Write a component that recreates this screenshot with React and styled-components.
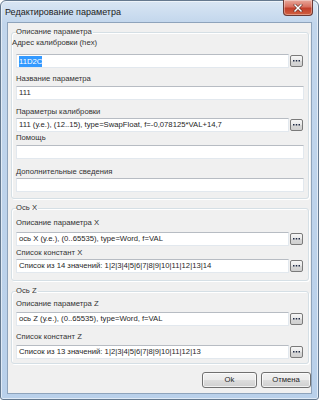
import React from "react";
import styled, { createGlobalStyle } from "styled-components";

const Global = createGlobalStyle`
  html, body { margin: 0; padding: 0; background: #fff; }
  body { font-family: "Liberation Sans", Arial, sans-serif; }
  * { box-sizing: border-box; }
`;

const Window = styled.div`
  width: 319px;
  height: 400px;
  border: 1px solid #65798f;
  border-radius: 6px 6px 3px 3px;
  background: linear-gradient(180deg, #d9e6f4 0px, #c2d6ec 22px, #b9d0ea 100%);
  display: flex;
  flex-direction: column;
  padding: 0 6px 5px 6px;
  box-shadow: inset 0 0 0 1px rgba(255,255,255,0.55);
`;

const TitleBar = styled.div`
  height: 21px;
  display: flex;
  align-items: flex-start;
  justify-content: space-between;
`;

const Title = styled.div`
  font-size: 9px;
  line-height: 11px;
  color: #222;
  padding-top: 6px;
  margin-left: -2px;
`;

const CloseButton = styled.div`
  width: 30px;
  height: 16px;
  margin-top: -1px;
  margin-right: -1px;
  border: 1px solid #6b3a35;
  border-top: none;
  border-radius: 0 0 4px 4px;
  background: linear-gradient(180deg, #e8a89b 0%, #d8705f 45%, #c23f2b 55%, #d0603f 100%);
  display: flex;
  align-items: center;
  justify-content: center;
  box-shadow: inset 0 0 0 1px rgba(255,255,255,0.35);
`;

const Client = styled.div`
  flex: 1;
  border: 1px solid #8ea3bb;
  background: #f0f0f0;
  padding: 4px 2px 0 3px;
  display: flex;
  flex-direction: column;
`;

const Group = styled.fieldset`
  margin: ${p => p.$top || 0}px 0 0 0;
  padding: 0 4px ${p => p.$bottom || 0}px 4px;
  border: 1px solid #d5dfe5;
  border-radius: 3px;
  box-shadow: 1px 1px 0 #ffffff inset, 1px 1px 0 #ffffff;
  min-width: 0;
`;

const Legend = styled.legend`
  padding: 0 1px 0 0;
  font-size: 7.7px;
  line-height: 10px;
  height: 10px;
  color: #333;
`;

const Label = styled.div`
  font-size: 7.7px;
  line-height: 10px;
  height: 10px;
  color: #333;
  white-space: nowrap;
  margin-top: ${p => p.$top || 0}px;
  margin-left: ${p => p.$shift || 0}px;
`;

const InputRow = styled.div`
  display: flex;
  align-items: center;
  gap: 1px;
  margin-top: ${p => p.$top || 0}px;
  height: 14px;
`;

const TextBox = styled.div`
  flex: 1;
  height: 14px;
  background: #ffffff;
  border: 1px solid #e2e8ee;
  border-top-color: #b7bcc3;
  font-size: 7.7px;
  line-height: 12px;
  color: #262626;
  padding-left: 2px;
  white-space: nowrap;
  overflow: hidden;
`;

const Selected = styled.span`
  background: #3399ff;
  color: #fff;
  display: inline-block;
  line-height: 11px;
  margin-top: 1px;
`;

const DotsButton = styled.div`
  width: 13px;
  height: 12px;
  margin-right: 1px;
  border: 1px solid #7a7a7a;
  border-radius: 2px;
  background: linear-gradient(180deg, #f6f6f6 0%, #e8e8e8 50%, #d8d8d8 51%, #d0d0d0 100%);
  display: flex;
  align-items: center;
  justify-content: center;
`;

const ButtonRow = styled.div`
  display: flex;
  justify-content: flex-end;
  gap: 4px;
  margin: 8px -2px 0 0;
`;

const PushButton = styled.div`
  width: ${p => p.$w}px;
  height: 16px;
  border: 1px solid #707070;
  border-radius: 3px;
  background: linear-gradient(180deg, #f2f2f2 0%, #ebebeb 50%, #dddddd 51%, #cfcfcf 100%);
  box-shadow: inset 0 0 0 1px rgba(255,255,255,0.7);
  font-size: 7.7px;
  line-height: 14px;
  text-align: center;
  color: #262626;
`;

function Dots() {
  return (
    <svg width="7" height="2" viewBox="0 0 7 2">
      <rect x="0" y="0" width="1.5" height="1.5" fill="#1f2a44" />
      <rect x="2.75" y="0" width="1.5" height="1.5" fill="#1f2a44" />
      <rect x="5.5" y="0" width="1.5" height="1.5" fill="#1f2a44" />
    </svg>
  );
}

function Field({ label, labelTop, inputTop, value, button, labelShift, children }) {
  return (
    <>
      <Label $top={labelTop} $shift={labelShift}>{label}</Label>
      <InputRow $top={inputTop}>
        <TextBox>{children || value}</TextBox>
        {button && (
          <DotsButton>
            <Dots />
          </DotsButton>
        )}
      </InputRow>
    </>
  );
}

export default function App() {
  return (
    <>
      <Global />
      <Window>
        <TitleBar>
          <Title>Редактирование параметра</Title>
          <CloseButton>
            <svg width="10" height="8" viewBox="0 0 10 8">
              <path d="M2 1 L8 7 M8 1 L2 7" stroke="#5a2a22" strokeWidth="2.6" strokeLinecap="square" />
              <path d="M2 1 L8 7 M8 1 L2 7" stroke="#ffffff" strokeWidth="1.5" strokeLinecap="square" />
            </svg>
          </CloseButton>
        </TitleBar>
        <Client>
          <Group $bottom={6}>
            <Legend>Описание параметра</Legend>
            <Field label="Адрес калибровки (hex)" labelTop={1} labelShift={-4} inputTop={6} button>
              <Selected>11D2C</Selected>
            </Field>
            <Field label="Название параметра" labelTop={6} inputTop={2} value="111" />
            <Field
              label="Параметры калибровки"
              labelTop={7}
              inputTop={1}
              button
              value="111 (у.е.), (12..15), type=SwapFloat, f=-0,078125*VAL+14,7"
            />
            <Field label="Помощь" labelTop={1} inputTop={2} value="" />
            <Field label="Дополнительные сведения" labelTop={8} inputTop={1} value="" />
          </Group>
          <Group $top={4} $bottom={7}>
            <Legend>Ось X</Legend>
            <Field
              label="Описание параметра X"
              labelTop={5}
              inputTop={4}
              button
              value="ось X (у.е.), (0..65535), type=Word, f=VAL"
            />
            <Field
              label="Список констант X"
              labelTop={2}
              inputTop={1}
              button
              value="Список из 14 значений: 1|2|3|4|5|6|7|8|9|10|11|12|13|14"
            />
          </Group>
          <Group $top={5} $bottom={4}>
            <Legend>Ось Z</Legend>
            <Field
              label="Описание параметра Z"
              labelTop={3}
              inputTop={3}
              button
              value="ось Z (у.е.), (0..65535), type=Word, f=VAL"
            />
            <Field
              label="Список констант Z"
              labelTop={6}
              inputTop={3}
              button
              value="Список из 13 значений: 1|2|3|4|5|6|7|8|9|10|11|12|13"
            />
          </Group>
          <ButtonRow>
            <PushButton $w={55}>Ok</PushButton>
            <PushButton $w={50}>Отмена</PushButton>
          </ButtonRow>
        </Client>
      </Window>
    </>
  );
}
